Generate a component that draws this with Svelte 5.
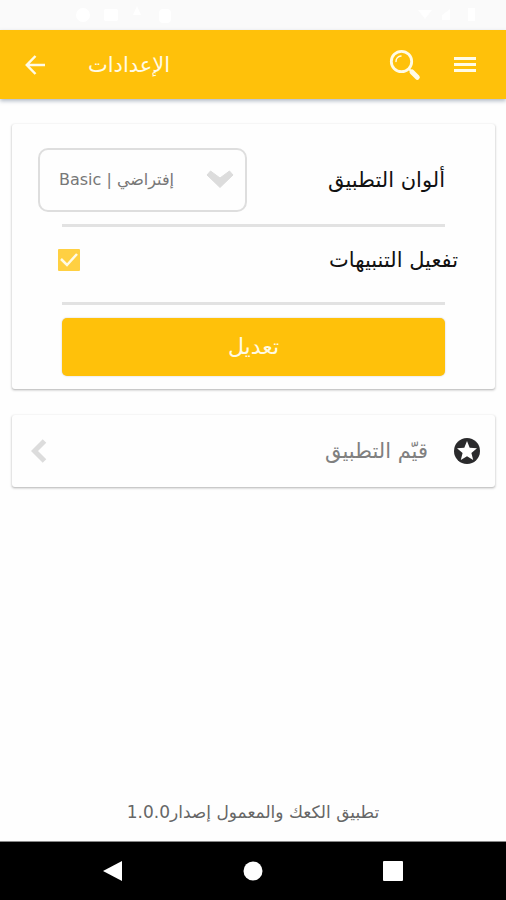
<script>
  let theme = $state('basic');
  let notify = $state(true);
</script>

<div class="screen" dir="rtl">
  <div class="status" aria-hidden="true">
    <svg width="72" height="18" viewBox="0 0 72 18" fill="#fff">
      <path d="M4 4h14l-7 9zM28 14V9l8-6v11zM54 2h7v13h-7z" />
    </svg>
    <svg width="100" height="18" viewBox="0 0 100 18" fill="#fff">
      <circle cx="7" cy="9" r="7" /><rect x="28" y="3" width="14" height="12" rx="2" />
      <path d="M61 0l4 9h-8z" /><rect x="83" y="3" width="12" height="14" rx="4" />
    </svg>
  </div>

  <header>
    <button class="icon" aria-label="القائمة">
      <svg width="24" height="18" viewBox="0 0 24 18" fill="#fffbe6">
        <path d="M1 1h22v3H1zM1 7h22v3H1zM1 13h22v3H1z" />
      </svg>
    </button>
    <button class="icon" aria-label="بحث">
      <svg width="32" height="32" viewBox="0 0 32 32" fill="none" stroke="#fffbe6">
        <circle cx="12.5" cy="12.5" r="10.2" stroke-width="2.8" />
        <path d="M7 12.5a5.500 5.500 0 0 1 5-5.500" stroke-width="1.500" stroke-linecap="round" />
        <path d="M20 20l2 2" stroke-width="2" />
        <path d="M23 23l5.300 5.300" stroke-width="5" stroke-linecap="round" />
      </svg>
    </button>
    <h1>الإعدادات</h1>
    <button class="icon" aria-label="رجوع">
      <svg width="20" height="20" viewBox="0 0 20 20" fill="none" stroke="#fffbe6" stroke-width="2.500">
        <path d="M20 10H2M10.500 1L1.800 10l8.700 9" />
      </svg>
    </button>
  </header>

  <main>
    <form class="card settings" onsubmit={(e) => e.preventDefault()}>
      <div class="row colors">
        <label for="theme">ألوان التطبيق</label>
        <div class="select">
          <select id="theme" bind:value={theme}>
            <option value="basic">إفتراضي | Basic</option>
          </select>
          <svg width="28" height="18" viewBox="0 0 28 18" fill="#dcdcdc">
            <path d="M1 5l3.500-4L14 8l9.500-7L27 5 14 17.500z" stroke="#dcdcdc" stroke-linejoin="round" />
          </svg>
        </div>
      </div>
      <div class="row alerts">
        <label for="notify">تفعيل التنبيهات</label>
        <input id="notify" type="checkbox" bind:checked={notify} />
      </div>
      <button class="submit">تعديل</button>
    </form>

    <a class="card rate" href="#rate">
      <svg width="26" height="26" viewBox="0 0 26 26">
        <circle cx="13" cy="13" r="13" fill="#2a2a2c" />
        <path d="M13 3l2.700 6.800 7.300.5-5.600 4.700 1.800 7.100-6.200-3.900-6.200 3.900 1.800-7.100L3 10.300l7.300-.5z" fill="#fff" />
      </svg>
      <span>قيّم التطبيق</span>
      <svg width="16" height="24" viewBox="0 0 16 24" fill="none" stroke="#dcdcdc" stroke-width="5">
        <path d="M13.500 2L3.500 12l10 10" />
      </svg>
    </a>
  </main>

  <footer>تطبيق الكعك والمعمول إصدار1.0.0</footer>

  <nav>
    <button aria-label="التطبيقات الأخيرة">
      <svg width="20" height="20" viewBox="0 0 20 20"><rect width="20" height="20" rx="1" fill="#fff" /></svg>
    </button>
    <button aria-label="الرئيسية">
      <svg width="20" height="20" viewBox="0 0 20 20"><circle cx="10" cy="10" r="9.500" fill="#fff" /></svg>
    </button>
    <button aria-label="السابق">
      <svg width="20" height="20" viewBox="0 0 20 20"><path d="M0 10L19 0v20z" fill="#fff" /></svg>
    </button>
  </nav>
</div>

<style>
  :global(body) {
    margin: 0;
    background: #fefefe;
  }

  .screen {
    display: flex;
    flex-direction: column;
    min-height: 100vh;
    font-family: 'DejaVu Sans', 'Noto Sans', sans-serif;
    font-size: 21px;
    line-height: 28px;
    color: #111;
  }

  button,
  select {
    font: inherit;
    margin: 0;
  }

  button {
    border: 0;
    padding: 0;
    background: none;
    cursor: pointer;
  }

  svg {
    display: block;
    flex: none;
  }

  .status {
    display: flex;
    justify-content: space-between;
    align-items: center;
    height: 30px;
    padding: 0 20px 0 76px;
    background: #fafafa;
  }

  header {
    display: flex;
    align-items: center;
    height: 69px;
    padding: 0 24px;
    background: #ffc10a;
    box-shadow: 0 2px 4px rgba(60, 80, 110, 0.4);
  }

  .icon {
    display: grid;
    place-items: center;
    width: 34px;
    height: 44px;
  }

  .icon + .icon {
    margin-right: 26px;
  }

  h1 {
    flex: 1;
    margin: 0;
    padding-left: 42px;
    direction: ltr;
    text-align: left;
    font-size: 21px;
    font-weight: normal;
    color: #fffbe6;
  }

  header .icon:last-child {
    width: 22px;
  }

  main {
    display: flex;
    flex-direction: column;
    gap: 26px;
    padding: 25px 11px 0 12px;
  }

  .card {
    border-radius: 3px;
    background: #fefefe;
    box-shadow: 0 1px 2px 1px rgba(0, 0, 0, 0.12), 0 1px 1px rgba(0, 0, 0, 0.12);
  }

  .settings {
    padding: 24px 50px 13px;
  }

  .row {
    display: flex;
    align-items: center;
    justify-content: space-between;
    border-bottom: 3px solid #e2e2e2;
  }

  .colors {
    padding-bottom: 12px;
  }

  .select {
    position: relative;
    width: 209px;
    margin-left: -24px;
  }

  select {
    appearance: none;
    display: block;
    box-sizing: border-box;
    width: 100%;
    height: 64px;
    padding: 0 71px 0 10px;
    border: 2px solid #dedede;
    border-radius: 10px;
    background: transparent;
    font-size: 16px;
    color: #777;
  }

  .select svg {
    position: absolute;
    top: 22px;
    right: 13px;
    pointer-events: none;
  }

  .alerts {
    height: 75px;
    margin-bottom: 13px;
  }

  .alerts label {
    margin-right: -13px;
    padding-bottom: 10px;
  }

  input {
    appearance: none;
    width: 22px;
    height: 22px;
    margin: 0 0 10px -4px;
    border-radius: 1px;
    background: #e2e2e2;
  }

  input:checked {
    background: #ffd042 url("data:image/svg+xml,%3Csvg xmlns='http://www.w3.org/2000/svg' viewBox='0 0 22 22'%3E%3Cpath d='M3 10l6 6L19 5' fill='none' stroke='%23fffbe6' stroke-width='2.500'/%3E%3C/svg%3E");
  }

  .submit {
    width: 100%;
    height: 58px;
    border-radius: 5px;
    background: #ffc10a;
    font-size: 22px;
    color: #fffbe6;
    box-shadow: 0 0 2px rgba(0, 0, 0, 0.2);
  }

  .rate {
    display: flex;
    align-items: center;
    height: 72px;
    padding: 0 15px 0 19px;
    color: #808080;
    text-decoration: none;
  }

  .rate span {
    flex: 1;
    padding-right: 26px;
  }

  footer {
    margin-top: auto;
    padding: 0 16px 17px;
    text-align: center;
    font-size: 17px;
    line-height: 24px;
    color: #666;
  }

  nav {
    display: flex;
    justify-content: center;
    gap: 120px;
    height: 58px;
    border-top: 1px solid #888;
    background: #000;
  }
</style>
